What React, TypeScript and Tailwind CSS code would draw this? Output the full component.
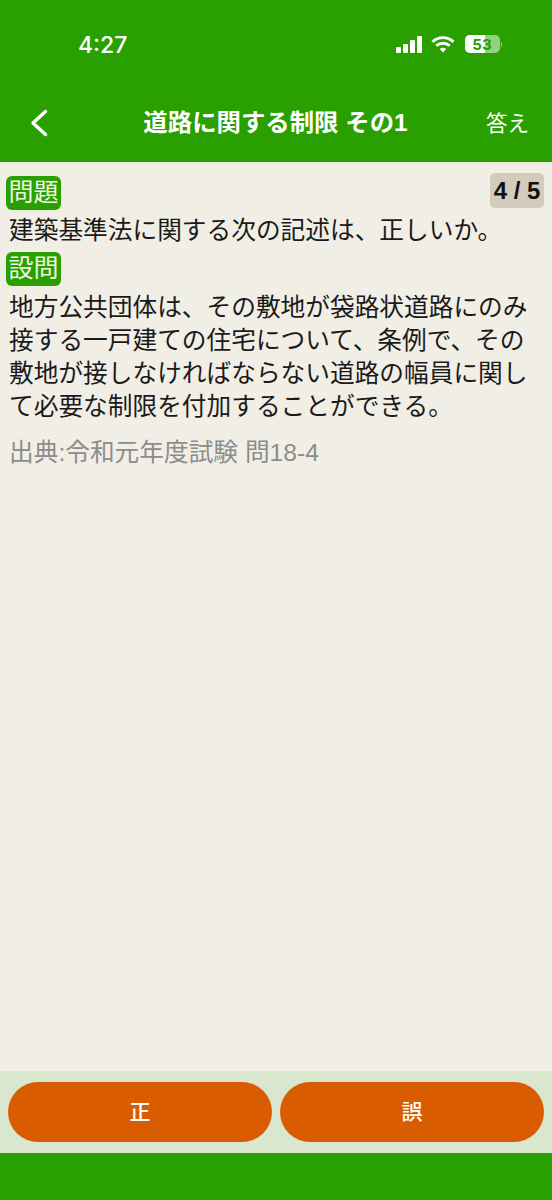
const jp = "font-['Liberation_Sans','Noto_Sans_CJK_JP',sans-serif]";

function StatusIcons() {
  return (
    <div className="flex items-center gap-[9px]">
      <div className="flex items-end gap-[2.5px]">
        <span className="w-[4.5px] h-[6px] bg-white rounded-[1px]" />
        <span className="w-[4.5px] h-[9px] bg-white rounded-[1px]" />
        <span className="w-[4.5px] h-[13px] bg-white rounded-[1px]" />
        <span className="w-[4.5px] h-[17px] bg-white rounded-[1px]" />
      </div>
      <svg width="24" height="17" viewBox="0 0 21 15" fill="none" stroke="white" strokeWidth="2.6">
        <path d="M1.2 5.2C6.6.2 14.4.2 19.8 5.2" />
        <path d="M4.6 8.6c3.4-3 8.4-3 11.8 0" />
        <path d="M10.5 14.5 7.6 11.5c1.7-1.4 4.1-1.4 5.8 0z" fill="white" stroke="none" />
      </svg>
      <div className="flex items-center gap-[1px] ml-[1px]">
        <div className="relative w-[35px] h-[18px] rounded-[5px] bg-white/50 overflow-hidden">
          <div className="w-[20px] h-full bg-white" />
          <span className="absolute inset-0 flex items-center justify-center text-[15px] font-bold text-[#2aa000] font-['Inter',sans-serif] leading-none">53</span>
        </div>
        <span className="w-[1.5px] h-[5px] bg-white/50 rounded-r-sm" />
      </div>
    </div>
  );
}

function Tag({ text }: { text: string }) {
  return (
    <div className="bg-[#2aa000] text-[#eef5e4] text-[25px] leading-[33px] h-[34px] w-[55px] text-center rounded-[6px] whitespace-nowrap">
      {text}
    </div>
  );
}

export default function App() {
  return (
    <div className={`w-[552px] h-[1200px] flex flex-col bg-[#f1eee5] ${jp}`}>
      <div className="bg-[#2aa000] h-[162px] text-white flex flex-col shrink-0">
        <div className="h-[86px] pl-[78px] pr-[50px] pt-[29px] flex items-start justify-between">
          <span className="text-[23px] leading-[32px] font-medium font-['Inter',sans-serif]">4:27</span>
          <div className="pt-[6px]">
            <StatusIcons />
          </div>
        </div>
        <div className="flex items-center h-[74px] pl-[30px] pr-[23px]">
          <svg width="18" height="28" viewBox="0 0 18 28" fill="none" stroke="white" strokeWidth="3.4" strokeLinecap="round" strokeLinejoin="round" className="shrink-0">
            <path d="M15.5 2.5 3 14l12.5 11.5" />
          </svg>
          <div className="flex-1 text-center text-[24.4px] font-bold leading-none pl-[17px] whitespace-nowrap">道路に関する制限 その1</div>
          <span className="text-[21.5px] leading-none mt-[3px]">答え</span>
        </div>
      </div>

      <div className="flex-1 relative px-[6px] pt-[14px]">
        <div className="absolute right-[8px] top-[11px] w-[54px] h-[35px] rounded-[5px] bg-[#d3ccbc] text-[#111] text-[24px] font-bold leading-[35px] text-center whitespace-nowrap">
          4 / 5
        </div>
        <Tag text="問題" />
        <p className="pl-[3px] mt-[3px] text-[24.7px] leading-[36px] text-[#1a1a1a] whitespace-nowrap">建築基準法に関する次の記述は、正しいか。</p>
        <div className="mt-[3px]">
          <Tag text="設問" />
        </div>
        <p className="pl-[3px] mt-[5px] pr-[10px] text-[24.7px] leading-[33px] text-[#1a1a1a]">
          地方公共団体は、その敷地が袋路状道路にのみ接する一戸建ての住宅について、条例で、その敷地が接しなければならない道路の幅員に関して必要な制限を付加することができる。
        </p>
        <p className="pl-[3px] mt-[12px] text-[24.7px] leading-[36px] text-[#8c8c8c]">出典:令和元年度試験 問18-4</p>
      </div>

      <div className="h-[82px] shrink-0 bg-[#dae7cf] flex gap-[8px] px-[8px] py-[11px]">
        <button className="flex-1 rounded-full bg-[#d95d00] text-white text-[21px] font-medium">正</button>
        <button className="flex-1 rounded-full bg-[#d95d00] text-white text-[21px] font-medium">誤</button>
      </div>
      <div className="h-[47px] shrink-0 bg-[#2aa000]" />
    </div>
  );
}
